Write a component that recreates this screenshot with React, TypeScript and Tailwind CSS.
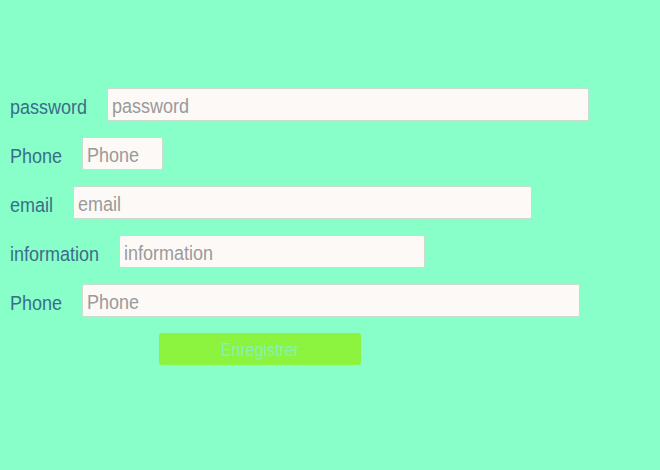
import React from "react";

const rows: { label: string; width: number }[] = [
  { label: "password", width: 482 },
  { label: "Phone", width: 81 },
  { label: "email", width: 459 },
  { label: "information", width: 306 },
  { label: "Phone", width: 498 },
];

export default function App() {
  return (
    <div
      className="w-[660px] h-[470px] bg-[#88ffc8] pt-[88px] pl-[10px]"
      style={{ fontFamily: '"Liberation Sans", Arial, sans-serif' }}
    >
      <div className="flex flex-col gap-[16px]">
        {rows.map((r, i) => (
          <div key={i} className="flex items-center gap-[20px] h-[33px]">
            <label className="text-[18px] leading-none text-[#3b6c8a] inline-block scale-y-[1.15] translate-y-[2px]">
              {r.label}
            </label>
            <div
              className="h-[33px] bg-[#fcf9f6] border border-[#c8dcd0] rounded-[2px] overflow-hidden"
              style={{ width: r.width }}
            >
              <input
                placeholder={r.label}
                className="w-full h-full bg-transparent px-[4px] pt-[4px] text-[18px] text-[#555] placeholder:text-[#9a9a9a] outline-none scale-y-[1.15]"
              />
            </div>
          </div>
        ))}
      </div>
      <button className="mt-[16px] ml-[149px] w-[202px] h-[32px] bg-[#8cf43e] rounded-[3px] text-[16px] text-[#86f0b8] flex items-center justify-center">
        <span className="inline-block scale-y-[1.15] translate-y-[1px]">Enregistrer</span>
      </button>
    </div>
  );
}
